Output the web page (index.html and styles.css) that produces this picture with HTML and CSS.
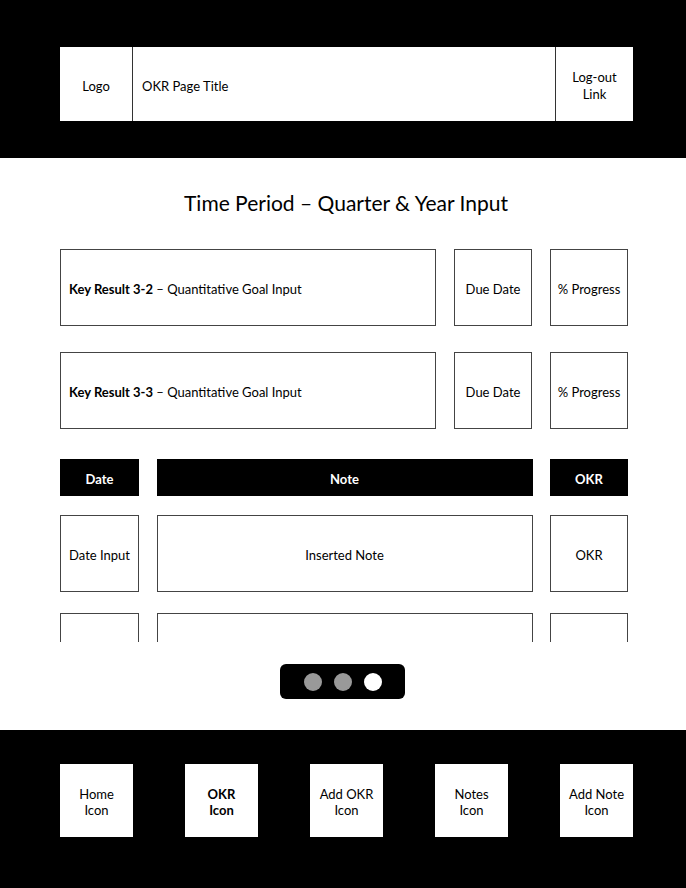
FILE: index.html
```html
<!DOCTYPE html>
<html>
<head>
  <title>OKR Page</title>
  <link rel="stylesheet" href="styles.css">
</head>
<body>
  <header class="topbar">
    <div class="topbar-box">
      <div class="logo">Logo</div>
      <div class="page-title">OKR Page Title</div>
      <div class="logout">Log-out<br>Link</div>
    </div>
  </header>

  <main class="content">
    <h1 class="period">Time Period &ndash; Quarter &amp; Year Input</h1>

    <div class="list">
      <div class="kr-row">
        <div class="cell kr-goal"><b>Key Result 3-2</b>&nbsp;&ndash; Quantitative Goal Input</div>
        <div class="cell">Due Date</div>
        <div class="cell">% Progress</div>
      </div>
      <div class="kr-row">
        <div class="cell kr-goal"><b>Key Result 3-3</b>&nbsp;&ndash; Quantitative Goal Input</div>
        <div class="cell">Due Date</div>
        <div class="cell">% Progress</div>
      </div>

      <div class="notes-head">
        <div class="head-cell">Date</div>
        <div class="head-cell">Note</div>
        <div class="head-cell">OKR</div>
      </div>
      <div class="notes-row">
        <div class="cell">Date Input</div>
        <div class="cell">Inserted Note</div>
        <div class="cell">OKR</div>
      </div>
      <div class="notes-row">
        <div class="cell"></div>
        <div class="cell"></div>
        <div class="cell"></div>
      </div>
    </div>

    <div class="pager">
      <span class="dot"></span>
      <span class="dot"></span>
      <span class="dot active"></span>
    </div>
  </main>

  <footer class="tabbar">
    <div class="tab">Home<br>Icon</div>
    <div class="tab current">OKR<br>Icon</div>
    <div class="tab">Add OKR<br>Icon</div>
    <div class="tab">Notes<br>Icon</div>
    <div class="tab">Add Note<br>Icon</div>
  </footer>
</body>
</html>
```

FILE: styles.css
```css
body {
  font-family: Lato, "Open Sans", sans-serif;
  margin: 0;
  padding: 0;
  background: #000;
  color: #000;
  width: 686px;
  font-size: 13px;
}

.topbar {
  height: 158px;
  box-sizing: border-box;
  padding: 47px 53px 0 60px;
  background: #000;
}

.topbar-box {
  display: flex;
  height: 74px;
  background: #fff;
}

.topbar-box > div {
  display: flex;
  align-items: center;
  padding-top: 3px;
  box-sizing: border-box;
}

.logo {
  width: 73px;
  justify-content: center;
  border-right: 1px solid #333;
}

.page-title {
  flex: 1;
  padding-left: 9px;
  border-right: 1px solid #333;
}

.logout {
  width: 77px;
  justify-content: center;
  text-align: center;
  line-height: 17px;
}

.content {
  height: 572px;
  box-sizing: border-box;
  background: #fff;
  padding: 32px 58px 0 60px;
}

.period {
  margin: 0;
  font-size: 21px;
  font-weight: normal;
  line-height: 26px;
  text-align: center;
  padding-left: 4px;
}

.list {
  margin-top: 33px;
  height: 393px;
  overflow: hidden;
}

.kr-row {
  display: grid;
  grid-template-columns: 376px 78px 78px;
  column-gap: 18px;
  height: 77px;
  margin-bottom: 26px;
}

.kr-row + .kr-row {
  margin-bottom: 30px;
}

.cell {
  box-sizing: border-box;
  border: 1px solid #444;
  display: flex;
  align-items: center;
  justify-content: center;
  text-align: center;
  padding-top: 2px;
}

.kr-goal {
  justify-content: flex-start;
  padding-left: 8px;
}

.notes-head,
.notes-row {
  display: grid;
  grid-template-columns: 79px 376px 78px;
  column-gap: 17.5px;
}

.notes-head {
  height: 37px;
  margin-bottom: 19px;
}

.head-cell {
  background: #000;
  color: #fff;
  font-weight: bold;
  display: flex;
  align-items: center;
  justify-content: center;
  padding-top: 2px;
}

.notes-row {
  height: 77px;
  margin-bottom: 21px;
}

.pager {
  margin: 22px 0 0 220px;
  width: 125px;
  height: 35px;
  background: #000;
  border-radius: 6px;
  display: flex;
  align-items: center;
  justify-content: center;
  gap: 12px;
}

.dot {
  width: 18px;
  height: 18px;
  border-radius: 50%;
  background: #999;
}

.dot.active {
  background: #fff;
}

.tabbar {
  height: 158px;
  box-sizing: border-box;
  padding: 34px 53px 0 60px;
  display: flex;
  justify-content: space-between;
  align-items: flex-start;
}

.tab {
  width: 73px;
  height: 73px;
  background: #fff;
  display: flex;
  align-items: center;
  justify-content: center;
  text-align: center;
  line-height: 16px;
  padding-top: 2px;
  box-sizing: border-box;
}

.tab.current {
  font-weight: bold;
}
```
